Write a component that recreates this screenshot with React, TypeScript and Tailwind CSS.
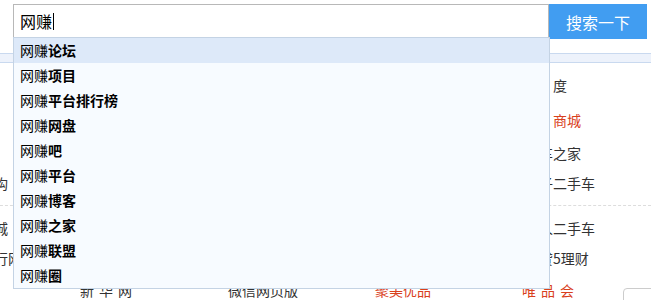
const suggestions = [
  '论坛',
  '项目',
  '平台排行榜',
  '网盘',
  '吧',
  '平台',
  '博客',
  '之家',
  '联盟',
  '圈',
];

// rows of the link panel sitting behind the dropdown
const linkRows: { left: string; right: string; red?: boolean; h: string; pad?: boolean }[] = [
  { left: '', right: '度', h: 'h-[34px]', pad: true },
  { left: '', right: '商城', red: true, h: 'h-[36px]', pad: true },
  { left: '', right: '汽车之家', h: 'h-[30px]' },
  { left: '机构', right: '瓜子二手车', h: 'h-[30px]' },
];

const linkRows2: { left: string; right: string; h: string }[] = [
  { left: '商城', right: '人人二手车', h: 'h-[30px]' },
  { left: '银行网点', right: '网贷5理财', h: 'h-[30px]' },
];

function SearchBox() {
  return (
    <div className="relative flex pl-[13px] pt-[4px]">
      <div className="flex h-[34px] w-[536px] items-center border border-[#b8b8b8] bg-white pl-[6px] text-[16px] text-black">
        <span>网赚</span>
        <span className="ml-px h-[17px] w-px bg-black" />
      </div>
      <button className="h-[35px] w-[98px] bg-[#419df1] text-[16px] text-white">
        搜索一下
      </button>

      {/* suggestion dropdown */}
      <ul className="absolute left-[13px] top-[37px] z-10 w-[537px] border border-[#c4d3e4] bg-[#f7fbff]">
        {suggestions.map((s, i) => (
          <li
            key={s}
            className={`flex h-[25px] items-center pl-[6px] text-[14px] text-black ${
              i === 0 ? 'bg-[#dde9f9]' : ''
            }`}
          >
            网赚<b className="font-bold">{s}</b>
          </li>
        ))}
      </ul>
    </div>
  );
}

export default function App() {
  return (
    <div
      className="relative h-[300px] w-[651px] overflow-hidden bg-white text-[#333]"
      style={{ fontFamily: '"Noto Sans CJK SC", "Liberation Sans", sans-serif' }}
    >
      <SearchBox />

      {/* tab strip */}
      <div className="mt-[14px] h-[10px] border-y border-[#c9d9ef] bg-[#edf2fb]" />

      <div className="-ml-[20px] mt-[5px] text-[14px]">
        {linkRows.map((r) => (
          <div key={r.right} className={`grid grid-cols-[545px_1fr] items-center ${r.h}`}>
            <span>{r.left}</span>
            <span className={`${r.red ? 'text-[#d9401c]' : ''} ${r.pad ? 'pl-[28px]' : ''}`}>
              {r.right}
            </span>
          </div>
        ))}
        <div className="mb-[7px] mt-[7px] border-t border-dashed border-[#dddddd]" />
        {linkRows2.map((r) => (
          <div key={r.right} className={`grid grid-cols-[545px_1fr] items-center ${r.h}`}>
            <span>{r.left}</span>
            <span>{r.right}</span>
          </div>
        ))}
        <div className="mt-[7px] flex items-start pl-[100px] leading-[20px]">
          <span className="w-[148px] shrink-0 tracking-[5px]">新华网</span>
          <span className="w-[147px] shrink-0">微信网页版</span>
          <span className="w-[147px] shrink-0 text-[#d9401c]">聚美优品</span>
          <span className="w-[80px] shrink-0 tracking-[5px] text-[#d9401c]">唯品会</span>
          <span className="ml-[21px] mt-[8px] h-[20px] w-[40px] shrink-0 rounded-[4px] border border-[#cccccc]" />
        </div>
      </div>
    </div>
  );
}
